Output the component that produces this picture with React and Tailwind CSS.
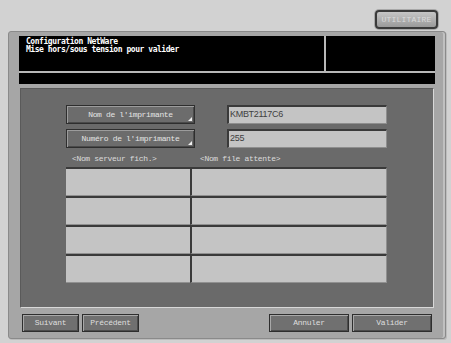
import React from "react";

const mono = { fontFamily: '"Liberation Mono", "DejaVu Sans Mono", monospace' };
const headMono = { fontFamily: '"DejaVu Sans Mono", "Liberation Mono", monospace' };

function KeyButton({ label }) {
  return (
    <div
      className="relative w-[129px] h-[19px] flex items-center justify-center bg-[#6c6c6c] border border-[#2e2e2e] shadow-[inset_1px_1px_0_#9c9c9c,inset_-1px_-1px_0_#4a4a4a] text-[8px] tracking-[-0.35px] text-[#e4e4e4]"
      style={mono}
    >
      {label}
      <svg className="absolute right-[2px] bottom-[2px]" width="4" height="4" viewBox="0 0 4 4">
        <polygon points="4,0 4,4 0,4" fill="#f2f2f2" />
      </svg>
    </div>
  );
}

function Field({ value }) {
  return (
    <div
      className="w-[160px] h-[19px] flex items-center pl-[1px] bg-[#c4c4c4] border-t-2 border-l-2 border-[#3a3a3a] border-b border-r border-b-[#8e8e8e] border-r-[#8e8e8e] text-[9px] tracking-[-0.3px] text-[#404040]"
      style={{ fontFamily: '"Liberation Sans", Arial, sans-serif' }}
    >
      {value}
    </div>
  );
}

function FootButton({ label, w }) {
  return (
    <div
      className={`${w} h-[18px] flex items-center justify-center bg-[#707070] border border-[#2e2e2e] shadow-[inset_1px_1px_0_#a8a8a8,inset_-1px_-1px_0_#4c4c4c] text-[8px] tracking-[-0.3px] text-[#dedede]`}
      style={mono}
    >
      {label}
    </div>
  );
}

export default function App() {
  const rows = [0, 1, 2, 3];
  return (
    <div className="w-[451px] h-[343px] bg-[#d2d2d2] overflow-hidden">
      <div className="h-[31px] flex justify-end pr-[13px] pt-[10px]">
        <div
          className="w-[63px] h-[19px] rounded-[4px] border-2 border-[#3a3a3a] bg-gradient-to-b from-[#c6c6c6] to-[#9a9a9a] shadow-[0_0_0_1px_#a8a8a8] flex items-center justify-center text-[8px] tracking-[0.2px] text-[#dadada]"
          style={mono}
        >
          UTILITAIRE
        </div>
      </div>

      <div className="ml-[8px] w-[438px] h-[308px] rounded-[3px] border border-[#8a8a8a] bg-[#a6a6a6] shadow-[inset_-2px_0_0_#c0c0c0,1px_1px_0_#bcbcbc] px-[10px] pt-[4px] flex flex-col">
        <div className="h-[35px] flex bg-[#b8b8b8]">
          <div
            className="flex-1 bg-black pl-[7px] pt-[2px] text-[8px] leading-[8px] font-bold tracking-[-0.45px] text-white"
            style={headMono}
          >
            <div>Configuration NetWare</div>
            <div>Mise hors/sous tension pour valider</div>
          </div>
          <div className="w-[2px]" />
          <div className="w-[109px] bg-black" />
        </div>
        <div className="h-[2px] bg-[#b8b8b8]" />
        <div className="h-[11px] bg-black" />
        <div className="h-[4px]" />

        <div className="mx-[1px] h-[220px] bg-[#6a6a6a] border border-[#5a5a5a] border-b-[#d8d8d8] border-r-[#d8d8d8] pl-[45px] pt-[16px] flex flex-col">
          <div className="flex gap-[32px]">
            <KeyButton label="Nom de l'imprimante" />
            <Field value="KMBT2117C6" />
          </div>
          <div className="flex gap-[32px] mt-[5px]">
            <KeyButton label="Numéro de l'imprimante" />
            <Field value="255" />
          </div>
          <div
            className="h-[19px] flex items-center pt-[3px] text-[8px] tracking-[-0.35px] text-[#dcdcdc]"
            style={mono}
          >
            <div className="w-[126px] pl-[6px]">&lt;Nom serveur fich.&gt;</div>
            <div className="pl-[8px]">&lt;Nom file attente&gt;</div>
          </div>
          <div className="flex flex-col">
            {rows.map((r) => (
              <div key={r} className="flex">
                <div className="w-[124px] h-[29px] bg-[#c4c4c4] border-t-2 border-[#3a3a3a] border-b border-b-[#909090]" />
                <div className="w-[197px] h-[29px] bg-[#c4c4c4] border-t-2 border-l-2 border-[#3a3a3a] border-b border-r border-b-[#909090] border-r-[#909090]" />
              </div>
            ))}
          </div>
        </div>

        <div className="mt-[6px] pl-[3px] flex">
          <div className="flex gap-[3px]">
            <FootButton label="Suivant" w="w-[57px]" />
            <FootButton label="Précédent" w="w-[57px]" />
          </div>
          <div className="flex-1" />
          <div className="flex gap-[3px] pr-[3px]">
            <FootButton label="Annuler" w="w-[80px]" />
            <FootButton label="Valider" w="w-[80px]" />
          </div>
        </div>
      </div>
    </div>
  );
}
